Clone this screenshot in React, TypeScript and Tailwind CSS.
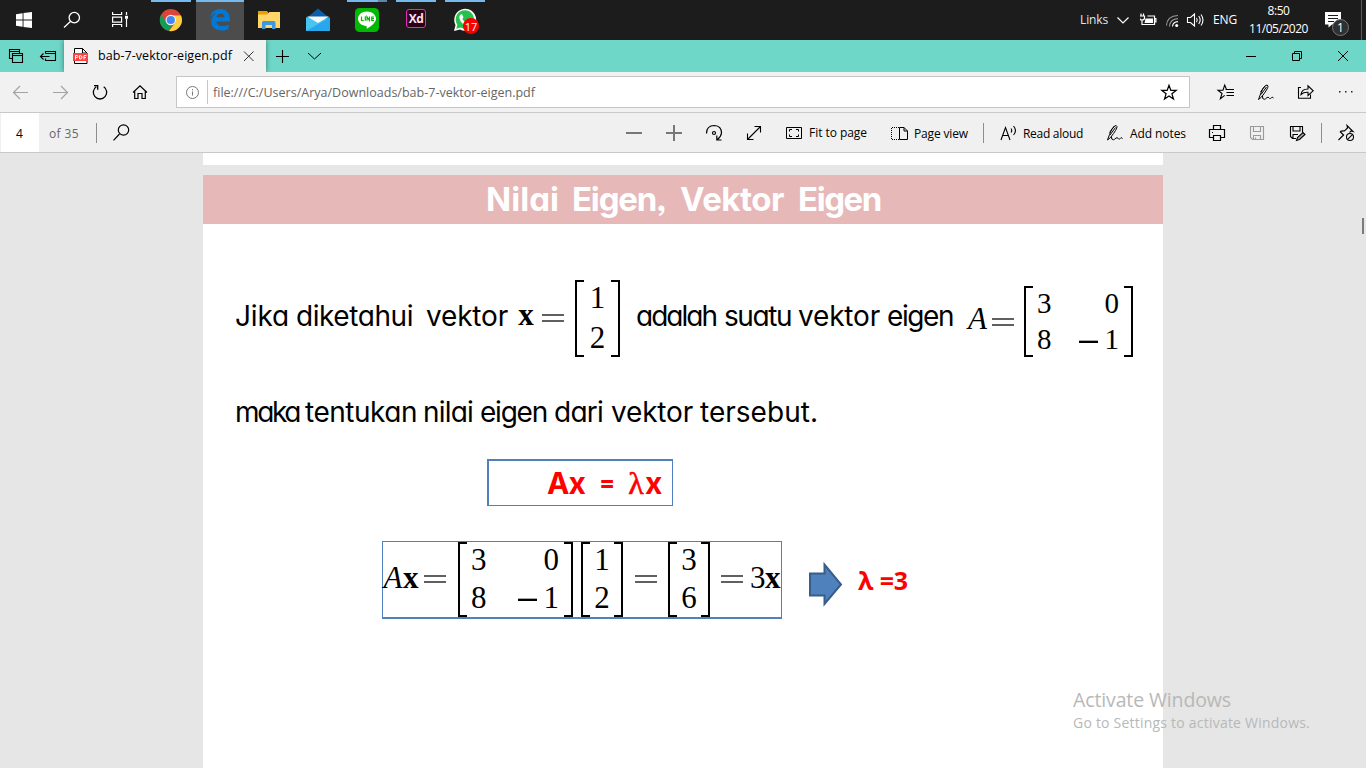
import { useLayoutEffect, useRef, useState, type ReactNode } from "react";

/** A single line of text whose tracking is adjusted so it fills `width` pixels. */
function Line({ width, className = "", children }: { width: number; className?: string; children: string }) {
  const ref = useRef<HTMLSpanElement>(null);
  const [spacing, setSpacing] = useState(0);
  useLayoutEffect(() => {
    if (!ref.current) return;
    const natural = ref.current.getBoundingClientRect().width;
    setSpacing((width - natural) / Math.max(1, children.length));
  }, [width, children]);
  return (
    <span className={`block shrink-0 whitespace-pre ${className}`} style={{ width }}>
      <span ref={ref} className="inline-block" style={{ letterSpacing: spacing }}>
        {children}
      </span>
    </span>
  );
}

function Icon({ w = 40, h = 40, stroke = "#000", sw = 1, className = "", children }: {
  w?: number; h?: number; stroke?: string; sw?: number; className?: string; children: ReactNode;
}) {
  return (
    <svg width={w} height={h} viewBox={`0 0 ${w} ${h}`} fill="none" stroke={stroke} strokeWidth={sw} className={`block shrink-0 ${className}`}>
      {children}
    </svg>
  );
}

/* ---------- Taskbar ---------- */

function Taskbar() {
  return (
    <header className="flex h-10 shrink-0 bg-[#1c1c1c] text-white">
      <Icon w={48} stroke="none">
        <path fill="#fff" d="M16 14.2l6.6-.9v6.2H16zM23.5 13.1l8.5-1.2v7.6h-8.5zM16 20.5h6.6v6.2l-6.6-.9zM23.5 20.5H32v7.6l-8.5-1.2z" />
      </Icon>
      <Icon w={48} stroke="#fff" sw={1.3}>
        <circle cx="26.3" cy="17.6" r="5.2" />
        <path d="M22.4 21.5L16 27.5" />
      </Icon>
      <Icon w={48} stroke="#fff" sw={1.2}>
        <path d="M16.6 12v2.5h9V12M16.6 27v-2.5h9V27M16.6 17.1h9v5h-9zM30.5 12v3M30.5 19v8" />
        <path fill="#fff" stroke="none" d="M29 15.8h3v3h-3z" />
      </Icon>
      <div className="ml-[3px] flex gap-px">
        <div className="relative">
          <div className="absolute left-1 top-0 h-0.5 w-10 bg-[#76b9ed]" />
          <Icon w={48} stroke="none">
            <circle cx="23.8" cy="20" r="11" fill="#db4437" />
            <path fill="#0f9d58" d="M14.3 14.5A11 11 0 0 0 22 30.8L27.6 22.5 19 22z" />
            <path fill="#ffcd40" d="M22 30.9A11 11 0 0 0 34 15.5H24l4.5 7z" />
            <circle cx="23.8" cy="20" r="5.3" fill="#f1f1f1" />
            <circle cx="23.8" cy="20" r="4.1" fill="#4285f4" />
          </Icon>
        </div>
        <div className="border-t-2 border-[#76b9ed] bg-[#4c4c4c]">
          <Icon w={48} h={38} stroke="none">
            <path fill="#0078d7" d="M13.8 16C15 9.6 19.5 7 24.2 7c6.600 0 9.700 4.700 9.700 9.600v2.900H20.500c.2 5.300 7.800 5.700 12 2.900v4.500c-1.800 1-4.200 1.600-7 1.600-6.200 0-10.300-3.600-10.300-9 0-3.800 2-6.700 5.300-8.300-3 .6-5.200 2.100-6.700 4.800zM20.600 15.300h7.800c0-5.200-7.200-5-7.800 0z" />
          </Icon>
        </div>
        <Icon w={48} stroke="none">
          <path fill="#e8a100" d="M13 11h9l1.500 2v4H13z" />
          <path fill="#ffd667" d="M13 14.500h9l2.500-2.500h10.500V28H13z" />
          <path fill="#3f97dc" d="M17 29v-6.500q0-1.500 1.500-1.500H29q1.500 0 1.500 1.500V29h-3.500v-4h-6.500v4z" />
        </Icon>
        <Icon w={48} stroke="none">
          <path fill="#0a5fad" d="M12 18.500L24 8.500l12 10z" />
          <path fill="#28a8ea" d="M12 17.500h24V31H12z" />
          <path fill="#46c5f5" d="M12 17.500v13.500L33 19z" />
          <path fill="#f7f7f7" d="M13 16.500h22l-11 6.500z" />
        </Icon>
        <div className="relative">
          <div className="absolute left-1 top-0 flex h-0.5 w-10 bg-[#76b9ed]">
            <div className="ml-auto w-[9px] bg-[#5a86ad]" />
          </div>
          <Icon w={48} stroke="none">
            <rect x="12" y="8" width="24" height="24" rx="4.500" fill="#00b900" />
            <path fill="#fff" d="M24 11.500c5 0 9 3.100 9 7.300 0 3.800-4.600 7.200-9.500 10.200.7-2.200.4-2.800-1-3-4.300-.6-7.500-3.500-7.500-7.200 0-4.200 4-7.300 9-7.300z" />
            <path stroke="#00b900" strokeWidth="1.200" d="M18.500 16.500v4h2.200M22.300 16.300v4.500M24 20.800v-4l2.500 3.700v-4M31 17h-2.300v3.500H31M28.700 18.700H31" />
          </Icon>
        </div>
        <div className="relative flex justify-center">
          <div className="absolute left-1 top-0 h-0.5 w-10 bg-[#76b9ed]" />
          <div className="flex w-12 justify-center pt-[9px]">
            <span className="flex h-[19px] w-5 items-center justify-center rounded-[3px] border border-[#e62bb9] bg-[#2b0019] font-['Open_Sans'] text-[12px] font-bold leading-none tracking-[-0.5px] text-[#ffe3f6]">Xd</span>
          </div>
        </div>
        <div className="relative">
          <div className="absolute left-1 top-0 h-0.5 w-10 bg-[#76b9ed]" />
          <Icon w={48} stroke="none">
            <path fill="#fff" d="M13 31l1.500-6A11 11 0 1 1 19 29.500z" />
            <path fill="#25c14c" d="M15.300 28.700l1-4A9.200 9.200 0 1 1 19.600 27.600z" />
            <path fill="#fff" d="M19.500 14.500l1.500-.2 1.500 3-1.200 1.700q1.500 2.600 4 3.700l1.500-1.500 3 1.500q0 3-3 3-7-1-8.500-8 0-2 1.200-3.200z" />
          </Icon>
          <span className="absolute left-[22px] top-[18px] flex size-4 items-center justify-center rounded-full bg-[#f60000] font-['Open_Sans'] text-[11px] leading-none">17</span>
        </div>
      </div>

      <div className="ml-auto flex items-center font-['Open_Sans'] text-[12px]">
        <Line width={28} className="text-[#e4e4e4]">Links</Line>
        <Icon w={32} stroke="#fff" sw={1.200}>
          <path d="M9.500 17.500l5.500 5.500 5.500-5.500" />
        </Icon>
        <Icon w={22} stroke="#fff" sw={1.200}>
          <path d="M4 24.500h10.500v-8.500H7.500M14.500 18.500h1.400v3.500h-1.400M-.5 16h5v2q0 2-2.500 2t-2.500-2zM1 13.500V16M3.500 13.500V16M2 20v4.500h2" />
          <path d="M5.500 18.500h7.500v4.500H4.500z" fill="#fff" stroke="none" />
        </Icon>
        <Icon w={24} stroke="#9a9a9a" sw={1.100}>
          <path d="M4.500 25.500Q5 16 16 15.500M7.500 26.500Q8 19 16 18.600" />
          <path stroke="#fff" d="M10.500 26.500q.3-4.700 5.500-4.900" />
          <circle cx="14.700" cy="25.500" r="1.500" fill="#fff" stroke="none" />
        </Icon>
        <Icon w={27} stroke="#fff" sw={1.100}>
          <path d="M1.500 17.500h3l4-3.500v12l-4-3.500h-3zM10.500 18q1.500 2 0 4.200M12.700 16q3 4 0 8M15 14.500q4 5.500 0 11" />
        </Icon>
        <Line width={24}>ENG</Line>
        <div className="ml-3 flex w-[59px] flex-col items-center leading-[18px]">
          <Line width={22}>8:50</Line>
          <Line width={59}>11/05/2020</Line>
        </div>
        <div className="relative ml-[17px] h-10 w-[36px]">
          <Icon w={36} stroke="none">
            <path fill="#fff" d="M0 12h16v12.500H7l-3.500 3V24.500H0z" />
            <path stroke="#1c1c1c" d="M3 15.500h10M3 18.500h10M3 21.500h6" />
          </Icon>
          <span className="absolute left-[7px] top-[19px] flex size-[17px] items-center justify-center rounded-full border border-[#777] bg-[#303030] text-[12px] leading-none">1</span>
        </div>
        <div className="h-10 w-[5px] border-l border-[#5a5a5a]" />
      </div>
    </header>
  );
}

/* ---------- Browser chrome ---------- */

function TabStrip() {
  return (
    <div className="flex h-8 shrink-0 bg-[#6ed7c7]">
      <Icon w={32} h={32} sw={1.100}>
        <path d="M9.500 9.500h10v9h-10zM9.500 11.500h10" />
        <path fill="#6ed7c7" d="M12.500 13.500h10v9h-10z" />
        <path d="M12.500 15.500h10" />
      </Icon>
      <Icon w={32} h={32} sw={1.100}>
        <path d="M13.500 13.500v-2h10v9h-10v-2M13.500 13.500h10M8.500 16.500h9M11.500 13.500l-3 3 3 3" />
      </Icon>
      <div className="flex w-[202px] items-center bg-[#f1f1f1] shadow-[0_0_5px_rgba(0,0,0,0.45)] [clip-path:inset(0_-6px_0_-6px)]">
        <Icon w={34} h={32} sw={1}>
          <path fill="#fff" d="M10.500 8.500h8l4.500 4.500v10.500H10.500z" />
          <path d="M18.500 8.500V13H23" />
          <path fill="#ff4040" stroke="none" d="M9 13h15v8H9z" />
          <path stroke="#fff" d="M11.500 19.500v-4h1.500q1 0 1 1t-1 1h-1.500M15.700 15.500v3.500h.8q1.500 0 1.500-1.750t-1.500-1.750zM20 19.500v-4h2.500M20 17.500h2" />
        </Icon>
        <Line width={134} className="font-['Open_Sans'] text-[12.500px] leading-8">bab-7-vektor-eigen.pdf</Line>
        <Icon w={33} h={32} stroke="#333">
          <path d="M12 11.500l9.500 9.500M21.500 11.500L12 21" />
        </Icon>
      </div>
      <Icon w={32} h={32} sw={1.100}>
        <path d="M10 16.500h13M16.500 10v13" />
      </Icon>
      <Icon w={32} h={32}>
        <path d="M10 13l6.500 6 6.500-6" />
      </Icon>
      <div className="ml-auto flex">
        <Icon w={46} h={32}><path d="M18 16.500h10" /></Icon>
        <Icon w={46} h={32}><path d="M18.500 13.500h7v7h-7zM20.500 13.500v-2h7v7h-2" /></Icon>
        <Icon w={46} h={32}><path d="M18 11l10 10M28 11L18 21" /></Icon>
      </div>
    </div>
  );
}

function Pen({ w = 40, h = 40 }: { w?: number; h?: number }) {
  return (
    <Icon w={w} h={h}>
      <g transform={`translate(${w / 2 - 20} ${h / 2 - 20})`}>
        <path d="M12.500 27.500l2-5.500q2-6.500 5-8.500 2-1.200 2.500.5.300 2.500-6.500 11l-3 2.500M15 22.500l5.500-7.500M14.500 20l5-6.500M16.500 24q-.5 3.500 2 3.300 1-.2 2.500-1.800 1.200-.7 2 .3.500 1 1.500.7 1-.5 1.500-1.300 1 .1 1.500.8" />
      </g>
    </Icon>
  );
}

function AddressBar() {
  return (
    <div className="flex h-[41px] shrink-0 border-b border-[#c9c9c9] bg-[#f1f1f1]">
      <Icon stroke="#a3a3a3" sw={1.200}><path d="M13 20.500h15M20 14l-6.500 6.500L20 27" /></Icon>
      <Icon stroke="#a3a3a3" sw={1.200}><path d="M13 20.500h15M21 14l6.500 6.500L21 27" /></Icon>
      <Icon sw={1.300}><path d="M16.300 14.700a6.700 6.700 0 1 0 7.400 0M14 13.700h3.700v4" /></Icon>
      <Icon sw={1.200}><path d="M13 20.500l7-6.700 7 6.700M14.700 19.500v7h3.300v-5h4v5h3.300v-7" /></Icon>
      <div className="ml-4 mt-1 flex h-8 w-[1014px] items-center border border-[#c6c6c6] bg-white">
        <Icon w={30} h={30} stroke="#777">
          <circle cx="15.500" cy="15.500" r="6" />
          <path d="M15.500 14.500v4M15.500 12v1.300" />
        </Icon>
        <div className="h-6 w-px bg-[#c6c6c6]" />
        <Line width={322} className="ml-[5px] translate-y-px font-['Open_Sans'] text-[12.500px] text-[#666]">file:///C:/Users/Arya/Downloads/bab-7-vektor-eigen.pdf</Line>
        <Icon w={40} h={30} className="ml-auto" sw={1.200}>
          <path d="M20 8.300l1.800 5h5.400l-4.300 3.400 1.600 5.400-4.500-3.200-4.500 3.200 1.600-5.400-4.300-3.400h5.400z" />
        </Icon>
      </div>
      <div className="ml-4 flex">
        <Icon sw={1.100}>
          <path d="M19.500 17.500h8.500M20.500 20.500H28M20.500 23.500H28M22 17.500h-1.500L18.700 13l-1.700 5.200h-5l4 3.300-1.600 5.200 4.300-3.300" />
        </Icon>
        <Pen />
        <Icon sw={1.100}>
          <path d="M15 15.500h-2.500v10.700h12v-3.700M15 22.500q.5-5.500 7-5.500v-3.200l5.200 5-5.200 4.700v-3.200q-4.500-.3-7 2.200z" />
        </Icon>
        <Icon stroke="none">
          <path fill="#222" d="M13 19h1.500v1.500H13zM19 19h1.500v1.500H19zM25 19h1.500v1.500H25z" />
        </Icon>
      </div>
    </div>
  );
}

function PdfToolbar() {
  return (
    <div className="flex h-10 shrink-0 items-center border-b border-[#c9c9c9] bg-[#f0f0f0] font-['Open_Sans'] text-[12px] leading-[39px]">
      <div className="ml-px h-[39px] w-[38px] bg-white pl-[15px] font-medium">
        <span className="block translate-y-px">4</span>
      </div>
      <Line width={30} className="ml-[10px] translate-y-px text-[#666]">of 35</Line>
      <div className="ml-[17px] h-5 w-px bg-[#8d8d8d]" />
      <Icon w={48} h={39} sw={1.200}>
        <circle cx="26.500" cy="17" r="5.200" />
        <path d="M22.500 21L16.500 27.300" />
      </Icon>
      <div className="ml-[469px] flex items-center">
        <Icon h={39} stroke="#777" sw={2}><path d="M12 20h16" /></Icon>
        <Icon h={39} stroke="#777" sw={2}><path d="M12 20h16M20 12v16" /></Icon>
        <Icon h={39} sw={1.200}>
          <path d="M12.500 20.500q0-8 8-8 7 .5 7 7.500-.3 3.500-4 6.500M22.800 22.500v4.500h4.700" />
          <circle cx="20" cy="20" r="1.500" />
        </Icon>
        <Icon h={39} sw={1.100}><path d="M13.500 26.500l13-13M20.500 13.500h6v6M13.500 20.500v6h6" /></Icon>
      </div>
      <Icon w={35} h={39}>
        <path d="M12.500 14.500h15v11h-15z" />
        <path d="M15.500 18.500v-2h2.500M22 16.500h2.500v2M24.500 21.500v2H22M18 23.500h-2.500v-2" />
      </Icon>
      <Line width={58}>Fit to page</Line>
      <Icon w={47} h={39}>
        <path strokeDasharray="1 1" d="M32 14.500h-7.500v12H32" />
        <path d="M32.500 14.500h4.500l3.500 3.500v8.500h-8zM37 14.500V18h3.500" />
      </Icon>
      <Line width={54} className="translate-y-px">Page view</Line>
      <div className="ml-[15px] h-5 w-px bg-[#8d8d8d]" />
      <Icon w={39} h={39} sw={1.100}>
        <path d="M17 27l4.500-12.500L26 27M18.700 22.500h5.700M27 15.500q1.500 2 0 4M29.500 13q4 4.500 0 9" />
      </Icon>
      <Line width={60} className="translate-y-px">Read aloud</Line>
      <div className="ml-[17px]"><Pen w={30} h={39} /></div>
      <Line width={56} className="translate-y-px">Add notes</Line>
      <div className="ml-[11px] flex">
        <Icon h={39} sw={1.200}>
          <path d="M16.500 16.500v-4h7v4M16.500 24.500h-4v-8h15v8h-4M16.500 22.500h7v5h-7zM15 19.500h1" />
        </Icon>
        <Icon h={39} stroke="#9a9a9a" sw={1.100}>
          <path d="M13.500 13.500h13v13h-11l-2-2zM16.500 13.500v5h7v-5M16.500 26.500v-4h7v4M18.500 26v-1.500" />
        </Icon>
        <Icon h={39} sw={1.100}>
          <path d="M19 25.500h-3.500l-2-2v-10h12v6M16 13.500v4.500h7v-4.500M16 25v-3.500h5" />
          <path fill="#aaa" d="M19.500 27.500l1-3 5.500-5 2 2-5.500 5z" />
        </Icon>
      </div>
      <div className="ml-1 h-5 w-px bg-[#8d8d8d]" />
      <Icon w={44} h={39} sw={1.100}>
        <path d="M16.500 27l5-5M18 18.500q2.500-1 4.500-.5l3-3-.5-2.500 6 6-2-.5-1.500 1.500M18 18.500l4 4" />
        <circle cx="28" cy="24" r="3.500" />
        <path d="M25.600 26.400l4.800-4.800" />
      </Icon>
    </div>
  );
}

/* ---------- Maths building blocks ---------- */

function Equals({ className = "" }: { className?: string }) {
  return <div className={`h-2 w-[22px] shrink-0 border-y-2 border-[#606060] ${className}`} />;
}

function Sym({ className = "", children }: { className?: string; children: ReactNode }) {
  return <span className={`block shrink-0 text-center font-['Liberation_Serif'] text-[31px] leading-[31px] ${className}`}>{children}</span>;
}

function Matrix({ rows, className = "", small = false }: { rows: string[][]; className?: string; small?: boolean }) {
  return (
    <div className={`flex shrink-0 ${className}`}>
      <div className="w-[9px] shrink-0 border-y-2 border-l-2 border-black" />
      <div className={`flex min-w-0 flex-1 flex-col justify-between ${small ? "py-px" : "pb-[4px] pt-[2px]"}`}>
        {rows.map((row, i) => (
          <div key={i} className={row.length > 1 ? "flex justify-between pl-1 pr-[5px]" : "flex justify-center"}>
            {row.map((cell, j) => (
              <span key={j} className={`flex items-center font-['Liberation_Serif'] ${small ? "text-[29px] leading-[33px]" : "text-[31px] leading-[31px]"}`}>
                {cell.startsWith("-") && <span className="mr-[7px] mt-1 h-[3px] w-[19px] border-b-2 border-t border-b-black border-t-[#aaa]" />}
                {cell.replace("-", "")}
              </span>
            ))}
          </div>
        ))}
      </div>
      <div className="w-[9px] shrink-0 border-y-2 border-r-2 border-black" />
    </div>
  );
}

const hand = "font-['Inter'] [font-feature-settings:'cv11','ss03']";

/** A phrase set word by word: each entry is [word, width, space after]. */
function Phrase({ words, className = "" }: { words: [string, number, number][]; className?: string }) {
  return (
    <div className={`flex shrink-0 ${hand} ${className}`}>
      {words.map(([word, width, gap], i) => (
        <div key={i} style={{ marginRight: gap }}>
          <Line width={width}>{word}</Line>
        </div>
      ))}
    </div>
  );
}

function Slide() {
  return (
    <article className="h-[593px] w-[960px] overflow-hidden bg-white">
      <h1 className="flex h-[49px] bg-[#e6b8b7] pl-[283px] text-[33px] font-bold leading-[49px] text-white">
        <Phrase words={[["Nilai", 73, 13], ["Eigen,", 94, 14], ["Vektor", 104, 14], ["Eigen", 83, 0]]} />
      </h1>

      <div className="mt-[56px] flex h-[78px] items-start pl-8">
        <Phrase className="text-[28px] leading-[72px]" words={[["Jika", 54, 7], ["diketahui", 117, 13], ["vektor", 82, 2]]} />
        <Sym className="ml-2 mt-[19px] w-[16px] font-bold">x</Sym>
        <Equals className="ml-2 mt-[34px]" />
        <Matrix className="ml-[11px] h-[77px] w-[45px]" rows={[["1"], ["2"]]} />
        <Phrase className="ml-4 text-[28px] leading-[72px]" words={[["adalah", 80, 8], ["suatu", 67, 7], ["vektor", 82, 7], ["eigen", 66, 0]]} />
        <Sym className="ml-[15px] mt-[23px] w-[19px] italic">A</Sym>
        <Equals className="ml-[5px] mt-[38px]" />
        <Matrix small className="ml-[10px] mt-[6px] h-[71px] w-[109px]" rows={[["3", "0"], ["8", "-1"]]} />
      </div>

      <div className="mt-[29px] pl-8">
        <Phrase
          className="text-[28px] leading-[50px]"
          words={[["maka", 64, 6], ["tentukan", 112, 6], ["nilai", 50, 7], ["eigen", 67, 7], ["dari", 49, 8], ["vektor", 82, 7], ["tersebut.", 118, 0]]}
        />
      </div>

      <div className={`ml-[284px] mt-[22px] flex h-[47px] w-[186px] items-center border border-l-2 border-t-2 border-[#4f81bd] pl-[58px] text-[30px] font-bold leading-[44px] text-[#f00] ${hand}`}>
        <Line width={38}>Ax</Line>
        <Line width={15} className="ml-[14px] text-[24px]">=</Line>
        <span className="ml-[14px] w-4 text-center font-['Liberation_Serif'] text-[32px] font-normal [-webkit-text-stroke:0.6px_#f00]">λ</span>
        <span className="ml-px">x</span>
      </div>

      <div className="ml-[179px] mt-[35px] flex items-center">
        <div className="flex h-[78px] w-[400px] items-start border border-b-2 border-[#4f81bd]">
          <Sym className="mt-[20px] w-[20px] italic">A</Sym>
          <Sym className="mt-[20px] w-[15px] font-bold">x</Sym>
          <Equals className="ml-[6px] mt-[33px]" />
          <Matrix className="ml-[12px] h-[75px] w-[115px]" rows={[["3", "0"], ["8", "-1"]]} />
          <Matrix className="ml-[8px] h-[75px] w-[42px]" rows={[["1"], ["2"]]} />
          <Equals className="ml-[12px] mt-[33px]" />
          <Matrix className="ml-[11px] h-[75px] w-[42px]" rows={[["3"], ["6"]]} />
          <Equals className="ml-[11px] mt-[33px]" />
          <Sym className="ml-[7px] mt-[20px] w-[15px]">3</Sym>
          <Sym className="mt-[20px] w-[15px] font-bold">x</Sym>
        </div>
        <svg width="34" height="46" viewBox="0 0 34 46" className="ml-[27px] mt-[7px] block">
          <path d="M1 12.500h14.500V3.500L32 23.500 15.500 43V34.500H1z" fill="#4f81bd" stroke="#385d8a" strokeWidth="2" />
        </svg>
        <Line width={50} className="ml-[15px] font-['Open_Sans'] text-[25px] font-bold leading-[36px] text-[#f00]">λ =3</Line>
      </div>
    </article>
  );
}

export default function App() {
  return (
    <div className="relative flex h-[768px] w-[1366px] flex-col overflow-hidden bg-[#e6e6e6] text-black">
      <Taskbar />
      <TabStrip />
      <AddressBar />
      <PdfToolbar />
      <main className="flex min-h-0 flex-1">
        <div className="ml-[203px] flex w-[960px] flex-col gap-[10px]">
          <div className="h-3 shrink-0 bg-white" />
          <Slide />
        </div>
        <div className="ml-auto mr-[2px] mt-[65px] h-4 w-[2px] bg-[#7c7c7c]" />
      </main>
      <div className="absolute left-[1073px] top-[686px] font-['Open_Sans'] text-[#b8b8b8]">
        <Line width={158} className="text-[19.500px] leading-7">Activate Windows</Line>
        <Line width={237} className="text-[14px] leading-[18px]">Go to Settings to activate Windows.</Line>
      </div>
    </div>
  );
}
